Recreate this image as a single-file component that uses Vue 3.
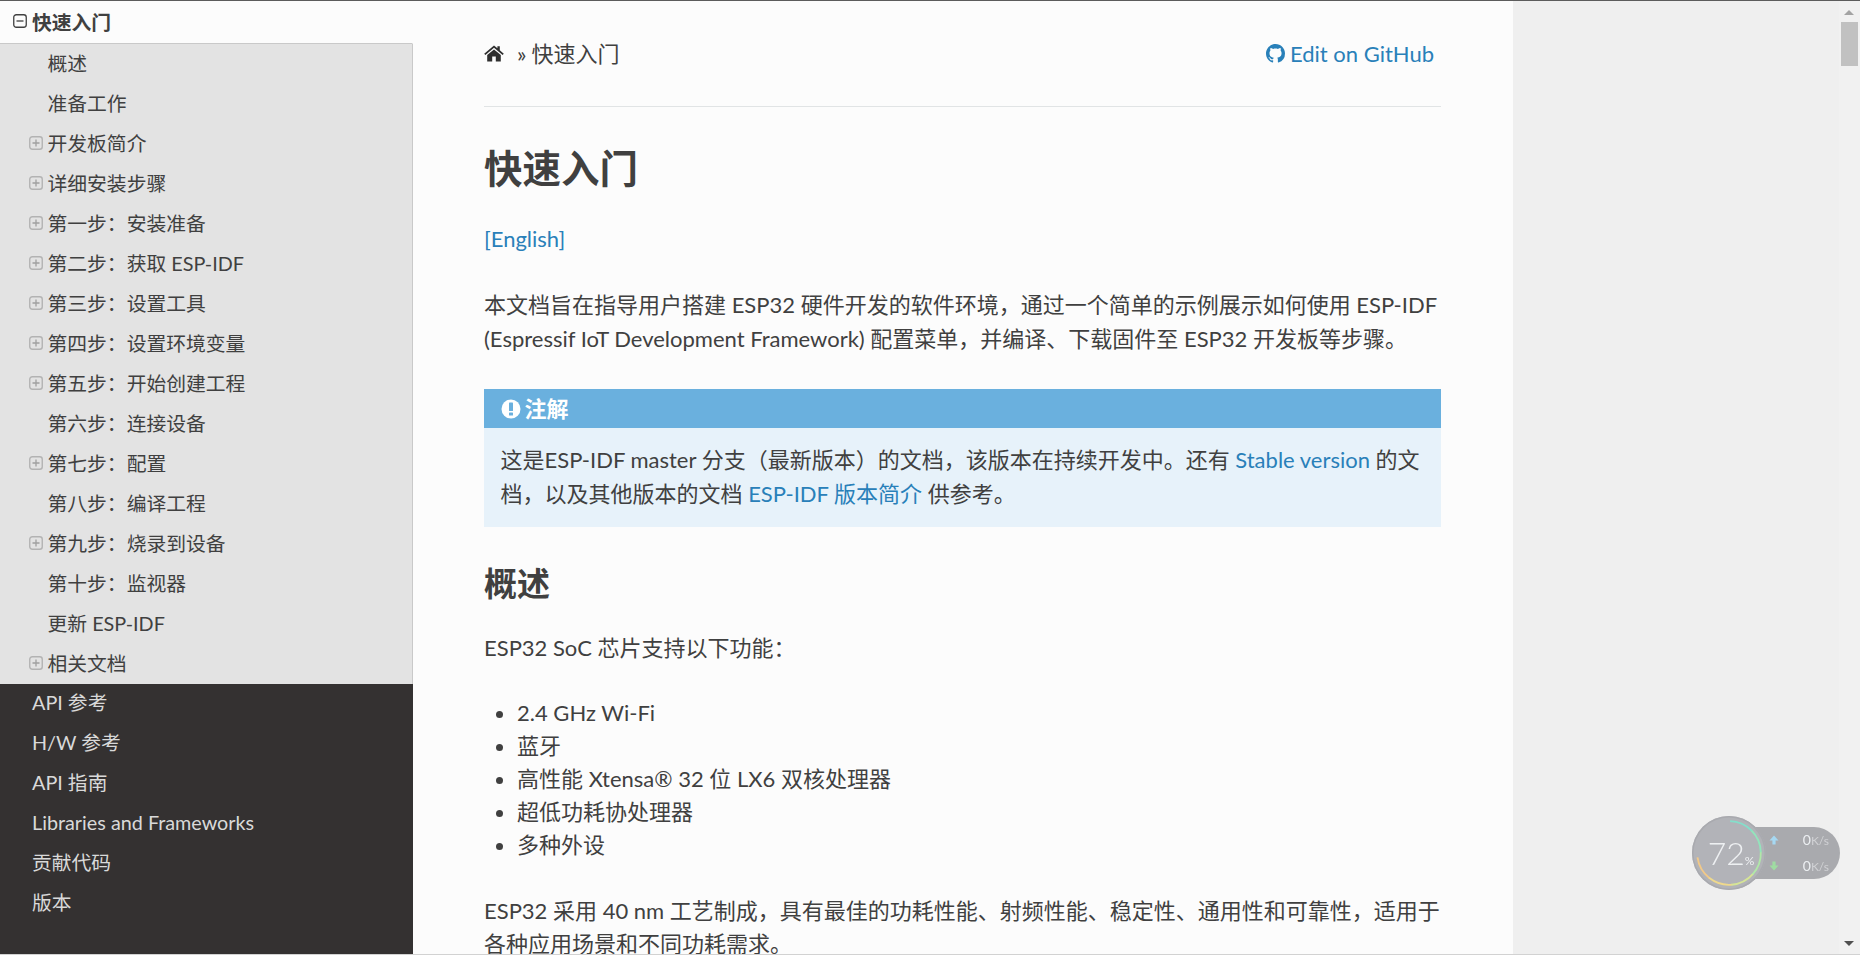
<script setup>
const subItems = [
  { text: '概述', more: false },
  { text: '准备工作', more: false },
  { text: '开发板简介', more: true },
  { text: '详细安装步骤', more: true },
  { text: '第一步：安装准备', more: true },
  { text: '第二步：获取 ESP-IDF', more: true },
  { text: '第三步：设置工具', more: true },
  { text: '第四步：设置环境变量', more: true },
  { text: '第五步：开始创建工程', more: true },
  { text: '第六步：连接设备', more: false },
  { text: '第七步：配置', more: true },
  { text: '第八步：编译工程', more: false },
  { text: '第九步：烧录到设备', more: true },
  { text: '第十步：监视器', more: false },
  { text: '更新 ESP-IDF', more: false },
  { text: '相关文档', more: true }
]

const topItems = ['API 参考', 'H/W 参考', 'API 指南', 'Libraries and Frameworks', '贡献代码', '版本']

const features = ['2.4 GHz Wi-Fi', '蓝牙', '高性能 Xtensa® 32 位 LX6 双核处理器', '超低功耗协处理器', '多种外设']

// 72% ring, split in pieces so the colour can run from yellow to teal
const ringColors = ['#f2c988', '#efd98c', '#d6e596', '#b0e8a8', '#93e4bc', '#84dfcb']
const ringPoint = (deg) => {
  const rad = (deg * Math.PI) / 180
  return `${(40 + 34.4 * Math.cos(rad)).toFixed(2)} ${(40 + 34.4 * Math.sin(rad)).toFixed(2)}`
}
const ringSegments = ringColors.map((color, i) => {
  const step = 260 / ringColors.length
  const from = 172 - i * step
  const to = i === ringColors.length - 1 ? from - step : from - step - 1
  return { color, d: `M${ringPoint(from)} A34.4 34.4 0 0 0 ${ringPoint(to)}` }
})
</script>

<template>
  <div class="page">
    <nav class="sidebar">
      <div class="current-top">
        <svg class="toggle" viewBox="0 0 14 14">
          <rect x="0.75" y="0.75" width="12.5" height="12.5" rx="2.5" fill="none" stroke="#404040" stroke-width="1.3" />
          <path d="M3.5 7h7" stroke="#404040" stroke-width="1.3" />
        </svg>
        <span>快速入门</span>
      </div>
      <ul class="sub-list">
        <li v-for="item in subItems" :key="item.text" class="sub-item">
          <svg v-if="item.more" class="toggle" viewBox="0 0 14 14">
            <rect x="0.75" y="0.75" width="12.5" height="12.5" rx="2.5" fill="none" stroke="#b3b3b3" stroke-width="1.4" />
            <path d="M3.5 7h7M7 3.5v7" stroke="#a0a0a0" stroke-width="1.3" />
          </svg>
          <span>{{ item.text }}</span>
        </li>
      </ul>
      <ul class="top-list">
        <li v-for="item in topItems" :key="item" class="top-item">{{ item }}</li>
      </ul>
    </nav>

    <main class="content">
      <div class="breadcrumbs">
        <svg class="home" viewBox="0 0 20 17">
          <path fill="#2f2f2f" d="M10 0.4 L13.4 3.3 V1.3 H15.8 V5.3 L19.8 8.7 L18.6 10 L10 2.8 L1.4 10 L0.2 8.7 Z" />
          <path fill="#2f2f2f" d="M10 4.4 L16.8 10 V16.6 H11.8 V11.6 H8.2 V16.6 H3.2 V10 Z" />
        </svg>
        <span class="sep">»</span>
        <span>快速入门</span>
        <a class="edit-link">
          <svg class="github" viewBox="0 0 16 16">
            <path fill="#2980b9" d="M8 0C3.58 0 0 3.58 0 8c0 3.54 2.29 6.53 5.47 7.59.4.07.55-.17.55-.38 0-.19-.01-.82-.01-1.49-2.01.37-2.53-.49-2.69-.94-.09-.23-.48-.94-.82-1.13-.28-.15-.68-.52-.01-.53.63-.01 1.08.58 1.23.82.72 1.21 1.87.87 2.33.66.07-.52.28-.87.51-1.07-1.78-.2-3.64-.89-3.64-3.95 0-.87.31-1.59.82-2.15-.08-.2-.36-1.02.08-2.12 0 0 .67-.21 2.2.82.64-.18 1.32-.27 2-.27.68 0 1.36.09 2 .27 1.53-1.04 2.2-.82 2.2-.82.44 1.1.16 1.92.08 2.12.51.56.82 1.27.82 2.15 0 3.07-1.87 3.75-3.65 3.95.29.25.54.73.54 1.48 0 1.07-.01 1.93-.01 2.2 0 .21.15.46.55.38A8.013 8.013 0 0016 8c0-4.42-3.58-8-8-8z" />
          </svg>
          Edit on GitHub
        </a>
      </div>
      <hr class="rule" />

      <h1>快速入门</h1>
      <p><a>[English]</a></p>
      <p class="tall">本文档旨在指导用户搭建 ESP32 硬件开发的软件环境，通过一个简单的示例展示如何使用 ESP-IDF (Espressif IoT Development Framework) 配置菜单，并编译、下载固件至 ESP32 开发板等步骤。</p>

      <div class="note">
        <div class="note-title">
          <svg class="note-icon" viewBox="0 0 20 20">
            <circle cx="10" cy="10" r="9.5" fill="#fff" />
            <rect x="8" y="3.6" width="4" height="8.4" rx="0.6" fill="#6ab0de" />
            <rect x="8" y="13.4" width="4" height="3.2" rx="0.6" fill="#6ab0de" />
          </svg>
          <span>注解</span>
        </div>
        <p class="note-body tall">这是ESP-IDF master 分支（最新版本）的文档，该版本在持续开发中。还有 <a>Stable version</a> 的文档，以及其他版本的文档 <a>ESP-IDF 版本简介</a> 供参考。</p>
      </div>

      <h2>概述</h2>
      <p class="list-intro">ESP32 SoC 芯片支持以下功能：</p>
      <ul class="features">
        <li v-for="feature in features" :key="feature">{{ feature }}</li>
      </ul>
      <p>ESP32 采用 40 nm 工艺制成，具有最佳的功耗性能、射频性能、稳定性、通用性和可靠性，适用于各种应用场景和不同功耗需求。</p>
    </main>

    <div class="scrollbar">
      <span class="scroll-arrow"></span>
      <span class="scroll-thumb"></span>
      <span class="scroll-arrow-down"></span>
    </div>

    <div class="net-widget">
      <div class="net-pill">
        <div class="net-row">
          <svg class="net-arrow" viewBox="0 0 10 10"><path fill="#a6d8f2" d="M5 0.5 L9.5 5.5 H6.6 V9.5 H3.4 V5.5 H0.5 Z" /></svg>
          <span class="net-value">0<small>K/s</small></span>
        </div>
        <div class="net-row">
          <svg class="net-arrow" viewBox="0 0 10 10"><path fill="#9fdca2" d="M5 9.5 L9.5 4.5 H6.6 V0.5 H3.4 V4.5 H0.5 Z" /></svg>
          <span class="net-value">0<small>K/s</small></span>
        </div>
      </div>
      <div class="net-ring">
        <svg class="ring-svg" viewBox="0 0 80 80">
          <path v-for="seg in ringSegments" :key="seg.d" :d="seg.d" :stroke="seg.color" stroke-width="2" fill="none" />
        </svg>
        <span class="ring-text">72<small>%</small></span>
      </div>
    </div>
  </div>
</template>

<style scoped>
.page {
  position: relative;
  display: flex;
  height: 955px;
  box-sizing: border-box;
  border-top: 1px solid #5c5c5c;
  border-bottom: 1px solid #d2d2d2;
  overflow: hidden;
  background: #efefef;
  font-family: Lato, "Noto Sans CJK SC", sans-serif;
  color: #404040;
}

.sidebar {
  flex: 0 0 413px;
  display: flex;
  flex-direction: column;
  background: #343131;
  font-size: 19.8px;
}
.current-top {
  display: flex;
  align-items: center;
  gap: 5px;
  height: 40px;
  padding: 0 0 2px 13px;
  background: #fcfcfc;
  font-weight: 700;
  border-bottom: 1px solid #c9c9c9;
  border-right: 1px solid #fcfcfc;
}
.toggle {
  width: 14px;
  height: 14px;
  flex: none;
}
.sub-list,
.top-list {
  margin: 0;
  padding: 0;
  list-style: none;
}
.sub-list {
  background: #e3e3e3;
  border-right: 1px solid #c9c9c9;
}
.sub-item {
  position: relative;
  height: 40px;
  line-height: 38px;
  padding-left: 47.5px;
}
.sub-item .toggle {
  position: absolute;
  left: 29px;
  top: 12px;
}
.top-item {
  height: 40px;
  line-height: 36px;
  padding-left: 32px;
  color: #d9d9d9;
}

.content {
  flex: 0 0 1100px;
  box-sizing: border-box;
  padding: 34px 72px 0 71px;
  background: #fcfcfc;
  font-size: 22px;
  line-height: 33px;
}
.breadcrumbs {
  display: flex;
  align-items: center;
  height: 36px;
}
.home {
  width: 20px;
  height: 17px;
  margin-right: 13px;
}
.sep {
  margin-right: 5px;
}
.edit-link {
  display: flex;
  align-items: center;
  gap: 5px;
  margin-left: auto;
  margin-right: 7px;
  color: #2980b9;
}
.github {
  width: 19px;
  height: 19px;
}
.rule {
  margin: 35px 0 38px;
  border: 0;
  border-top: 1px solid #e1e4e5;
}
h1 {
  margin: 0 0 31px;
  font-size: 38.5px;
  line-height: 46px;
  font-weight: 700;
}
h2 {
  margin: 0 0 28px;
  font-size: 33px;
  line-height: 40px;
  font-weight: 700;
}
p {
  margin: 0 0 33px;
}
.tall {
  line-height: 34px;
}
.list-intro {
  margin-bottom: 32px;
}
a {
  color: #2980b9;
}
.note {
  margin-bottom: 35.5px;
  background: #e7f2fa;
}
.note-title {
  display: flex;
  align-items: center;
  gap: 4px;
  height: 39px;
  padding: 0 16.5px;
  background: #6ab0de;
  color: #fff;
  font-weight: 700;
}
.note-icon {
  width: 20px;
  height: 20px;
}
.note-body {
  margin: 0;
  padding: 14.5px 16.5px 16.5px;
}
.features {
  margin: 0 0 33px;
  padding-left: 33px;
}

.scrollbar {
  position: absolute;
  top: 0;
  right: 0;
  bottom: 0;
  width: 21px;
  background: #f1f1f1;
}
.scroll-arrow {
  position: absolute;
  top: 9px;
  left: 5px;
  border: 5px solid transparent;
  border-top: 0;
  border-bottom-color: #a3a3a3;
}
.scroll-arrow-down {
  position: absolute;
  bottom: 8px;
  left: 5px;
  border: 5px solid transparent;
  border-bottom: 0;
  border-top-color: #505050;
}
.scroll-thumb {
  position: absolute;
  top: 21px;
  left: 2px;
  width: 17px;
  height: 44px;
  background: #c1c1c1;
}

.net-widget {
  position: absolute;
  left: 1692px;
  top: 815px;
  width: 148px;
  height: 74px;
  filter: blur(0.6px);
}
.net-pill {
  position: absolute;
  left: 36px;
  top: 11px;
  width: 112px;
  height: 52px;
  box-sizing: border-box;
  padding: 0 11px 0 41px;
  border-radius: 0 26px 26px 0;
  background: #a9aaae;
  display: flex;
  flex-direction: column;
  justify-content: space-around;
}
.net-row {
  display: flex;
  align-items: center;
  justify-content: space-between;
}
.net-arrow {
  width: 10px;
  height: 10px;
}
.net-value {
  color: #eceff2;
  font-size: 14px;
  line-height: 15px;
}
.net-value small {
  font-size: 12px;
  color: #d0d1d4;
}
.net-ring {
  position: absolute;
  left: 0;
  top: 0;
  width: 74px;
  height: 74px;
  border-radius: 50%;
  background: #b2b3b8;
  box-shadow: inset 0 0 0 1.5px #a9aaaf;
  display: flex;
  align-items: center;
  justify-content: center;
}
.ring-svg {
  position: absolute;
  inset: 0;
  width: 100%;
  height: 100%;
}
.ring-text {
  color: #eef0f2;
  font-size: 32px;
  font-weight: 300;
  line-height: 1;
  padding-left: 4px;
}
.ring-text small {
  font-size: 12px;
  font-weight: 400;
}
</style>
